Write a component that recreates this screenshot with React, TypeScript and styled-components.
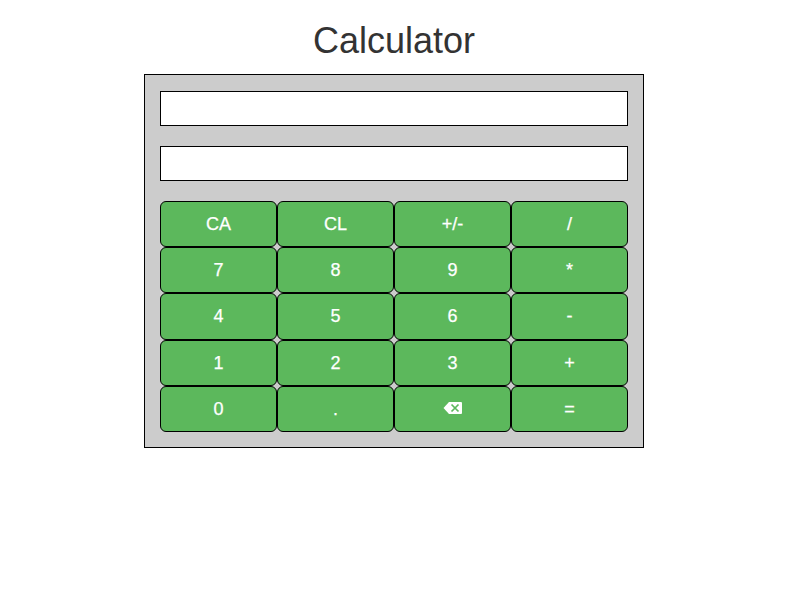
import React from "react";
import styled, { createGlobalStyle } from "styled-components";

const GlobalStyle = createGlobalStyle`
  *, *::before, *::after { box-sizing: border-box; }
  body {
    margin: 0;
    background: #fff;
    color: #333;
    font-family: "Liberation Sans", Arial, sans-serif;
    font-size: 14px;
    line-height: 20px;
  }
`;

const Page = styled.main`
  display: flex;
  flex-direction: column;
  align-items: center;
  width: 788px;
`;

const Title = styled.h1`
  margin: 21px 0 13.4px;
  font-size: 36px;
  font-weight: 500;
  line-height: 40px;
`;

const Body = styled.section`
  display: flex;
  flex-direction: column;
  gap: 20.2px;
  width: 500px;
  padding: 15.2px 15px 15px;
  border: 1px solid #000;
  background: #ccc;
`;

const Display = styled.div`
  height: 35px;
  border: 1px solid #000;
  background: #fff;
`;

const Keys = styled.div`
  display: grid;
  grid-template-columns: repeat(4, 1fr);
`;

const Key = styled.button`
  display: flex;
  align-items: center;
  justify-content: center;
  height: 46.2px;
  padding: 0;
  border: 1px solid #000;
  border-radius: 6px;
  background: #5cb85c;
  color: #fff;
  font: 18px/24px "Liberation Sans", Arial, sans-serif;
  -webkit-text-stroke: 0.25px #fff;
`;

const BackspaceIcon = styled.svg`
  margin-bottom: 2px;
`;

const Backspace = () => (
  <BackspaceIcon width="20" height="14" viewBox="0 0 20 14" aria-label="Backspace">
    <path fill="#fff" d="M6 1h12q1 0 1 1v10q0 1-1 1H6L0.5 7z" />
    <path stroke="#5cb85c" strokeWidth="1.7" d="M8.5 3.5l7 7m0-7l-7 7" />
  </BackspaceIcon>
);

const labels = [
  "CA", "CL", "+/-", "/",
  "7", "8", "9", "*",
  "4", "5", "6", "-",
  "1", "2", "3", "+",
  "0", ".", "back", "=",
];

export default function App() {
  return (
    <Page>
      <GlobalStyle />
      <Title>Calculator</Title>
      <Body>
        <Display />
        <Display />
        <Keys>
          {labels.map((label) => (
            <Key key={label}>{label === "back" ? <Backspace /> : label}</Key>
          ))}
        </Keys>
      </Body>
    </Page>
  );
}
